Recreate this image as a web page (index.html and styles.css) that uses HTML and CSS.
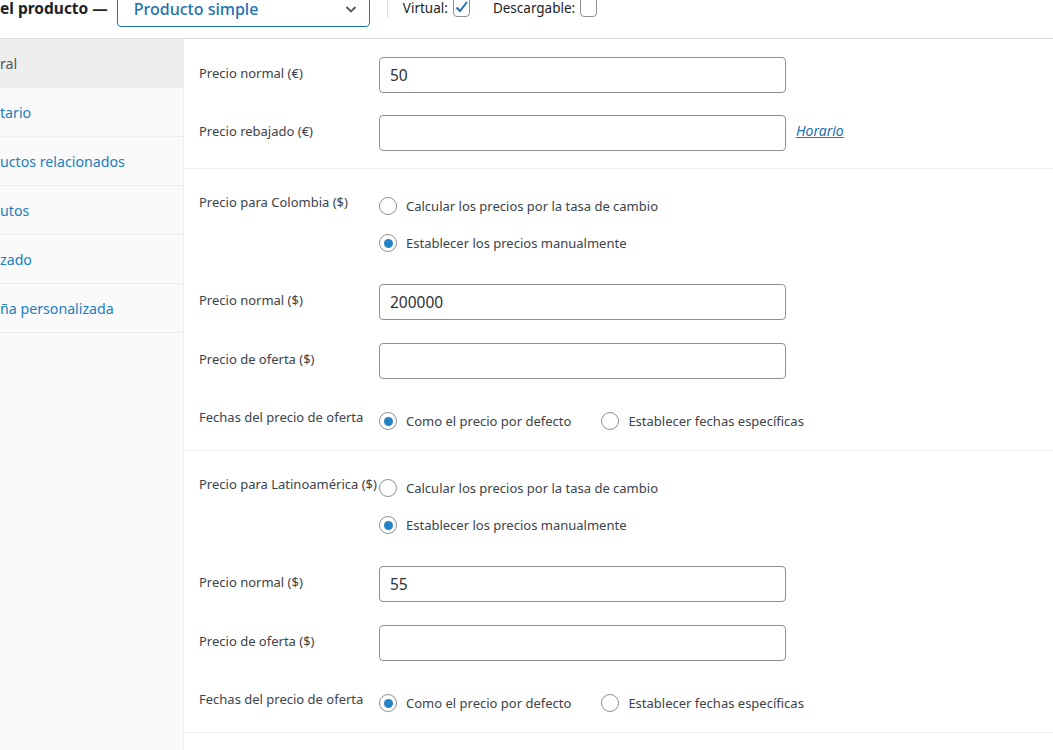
FILE: index.html
```html
<!DOCTYPE html>
<html lang="es">
<head>
<meta charset="utf-8">
<title>Datos del producto</title>
<link rel="stylesheet" href="styles.css">
</head>
<body>
<header class="header">
  <div class="hrow">
    <span class="title">el producto —</span>
    <div class="select">
      <span>Producto simple</span>
      <svg class="chev" width="14" height="14" viewBox="0 0 14 14"><path d="M2.5 5 L7 9.5 L11.5 5" fill="none" stroke="#50575e" stroke-width="1.8"/></svg>
    </div>
    <span class="vsep"></span>
    <label class="tick">Virtual: <span class="cb checked"><svg width="15" height="15" viewBox="0 0 15 15"><path d="M2.5 7.5 L6 11 L13 2" fill="none" stroke="#2271b1" stroke-width="2"/></svg></span></label>
    <label class="tick">Descargable: <span class="cb"></span></label>
  </div>
</header>
<div class="layout">
  <nav class="sidebar">
    <div class="tab active">ral</div>
    <div class="tab">tario</div>
    <div class="tab">uctos relacionados</div>
    <div class="tab">utos</div>
    <div class="tab">zado</div>
    <div class="tab">ña personalizada</div>
  </nav>
  <main class="panel">
    <section class="group first">
      <div class="field">
        <span class="label">Precio normal (€)</span>
        <div class="input">50</div>
      </div>
      <div class="field">
        <span class="label">Precio rebajado (€)</span>
        <div class="input"></div>
        <a class="link" href="#">Horario</a>
      </div>
    </section>
    <section class="group">
      <div class="field radios-field">
        <span class="label up">Precio para Colombia ($)</span>
        <div class="radio-col">
          <div class="opt"><span class="radio"></span>Calcular los precios por la tasa de cambio</div>
          <div class="opt"><span class="radio on"></span>Establecer los precios manualmente</div>
        </div>
      </div>
      <div class="field after-radios">
        <span class="label">Precio normal ($)</span>
        <div class="input">200000</div>
      </div>
      <div class="field">
        <span class="label">Precio de oferta ($)</span>
        <div class="input"></div>
      </div>
      <div class="field radios-inline">
        <span class="label up">Fechas del precio de oferta</span>
        <div class="opt"><span class="radio on"></span>Como el precio por defecto</div>
        <div class="opt"><span class="radio"></span>Establecer fechas específicas</div>
      </div>
    </section>
    <section class="group">
      <div class="field radios-field">
        <span class="label up">Precio para Latinoamérica ($)</span>
        <div class="radio-col">
          <div class="opt"><span class="radio"></span>Calcular los precios por la tasa de cambio</div>
          <div class="opt"><span class="radio on"></span>Establecer los precios manualmente</div>
        </div>
      </div>
      <div class="field after-radios">
        <span class="label">Precio normal ($)</span>
        <div class="input">55</div>
      </div>
      <div class="field">
        <span class="label">Precio de oferta ($)</span>
        <div class="input"></div>
      </div>
      <div class="field radios-inline">
        <span class="label up">Fechas del precio de oferta</span>
        <div class="opt"><span class="radio on"></span>Como el precio por defecto</div>
        <div class="opt"><span class="radio"></span>Establecer fechas específicas</div>
      </div>
    </section>
  </main>
</div>
</body>
</html>
```
FILE: styles.css
```css
* { box-sizing: border-box; }
html, body { margin: 0; height: 100%; }
body {
  background: #fff;
  font-family: "Noto Sans", "Open Sans", sans-serif;
  color: #3c434a;
  overflow: hidden;
}
.header {
  height: 39px;
  border-bottom: 1px solid #dcdcde;
}
.hrow {
  height: 16px;
  display: flex;
  align-items: center;
}
.title {
  font-weight: 700;
  font-size: 15.5px;
  color: #1d2327;
  white-space: nowrap;
}
.select {
  margin-left: 9px;
  width: 253px;
  height: 36px;
  margin-top: 2px;
  border: 1px solid #2271b1;
  border-radius: 4px;
  display: flex;
  align-items: center;
  justify-content: space-between;
  padding: 0 11px 0 16px;
  color: #2271b1;
  font-size: 16px;
  font-weight: 500;
  flex-shrink: 0;
}
.chev { display: block; }
.vsep {
  align-self: flex-start;
  width: 1px;
  height: 18px;
  background: #dcdcde;
  margin: 0 15px 0 17px;
}
.tick {
  display: flex;
  align-items: center;
  gap: 5px;
  font-size: 13.5px;
  color: #1d2327;
  margin-right: 23px;
  white-space: nowrap;
}
.cb {
  width: 17px;
  height: 20px;
  margin-top: -2px;
  border: 1px solid #8c8f94;
  border-radius: 4px;
  display: flex;
  align-items: center;
  justify-content: center;
  background: #fff;
}
.layout {
  display: flex;
  height: calc(100% - 39px);
}
.sidebar {
  width: 184px;
  flex-shrink: 0;
  background: #fafafa;
  border-right: 1px solid #eee;
}
.tab {
  height: 49px;
  border-bottom: 1px solid #eee;
  display: flex;
  align-items: center;
  font-size: 14.2px;
  color: #1b7fc0;
  white-space: nowrap;
}
.tab.active {
  background: #eee;
  color: #50575e;
}
.panel { flex: 1; }
.group {
  border-bottom: 1px solid #eee;
  padding: 27px 0 19px;
}
.group.first { padding: 18px 0 17px; }
.field {
  display: flex;
  align-items: flex-start;
  padding-left: 15px;
}
.field + .field { margin-top: 22px; }
.group:not(.first) .field + .field { margin-top: 23px; }
.group:not(.first) .field.after-radios { margin-top: 31px; }
.group:not(.first) .field.radios-inline { margin-top: 32px; align-items: center; }
.label {
  width: 180px;
  flex-shrink: 0;
  font-size: 13px;
  line-height: 20px;
  margin-top: 6px;
}
.label.up { margin-top: -4px; align-self: flex-start; }
.input {
  width: 407px;
  height: 36px;
  border: 1px solid #8c8f94;
  border-radius: 4px;
  padding: 0 10px;
  display: flex;
  align-items: center;
  font-size: 15.5px;
  color: #2c3338;
}
.link {
  margin-left: 10px;
  margin-top: 6px;
  font-size: 14px;
  font-style: italic;
  color: #2271b1;
  line-height: 20px;
}
.radio-col {
  display: flex;
  flex-direction: column;
  gap: 17px;
}
.opt {
  display: flex;
  align-items: center;
  height: 20px;
  font-size: 13px;
  white-space: nowrap;
}
.radios-inline .opt + .opt { margin-left: 30px; }
.radio {
  width: 18px;
  height: 18px;
  border: 1px solid #8c8f94;
  border-radius: 50%;
  margin-right: 9px;
  display: flex;
  align-items: center;
  justify-content: center;
  background: #fff;
}
.radio.on::after {
  content: "";
  width: 9px;
  height: 9px;
  border-radius: 50%;
  background: #2582c4;
}
```
